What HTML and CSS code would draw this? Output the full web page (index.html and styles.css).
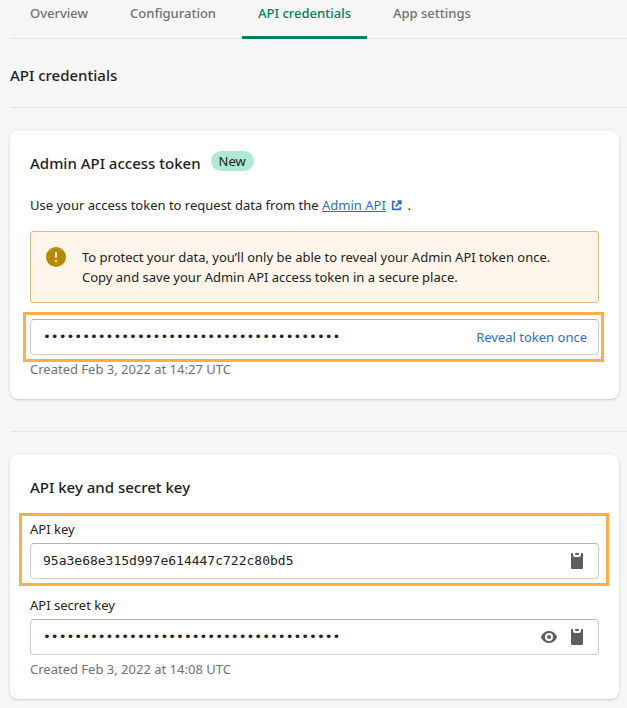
FILE: index.html
```html
<!DOCTYPE html>
<html lang="en">
<head>
<meta charset="utf-8">
<meta name="viewport" content="width=device-width, initial-scale=1">
<title>API credentials</title>
<link rel="stylesheet" href="styles.css">
</head>
<body>
<nav class="tabs">
  <a class="tab" href="#overview">Overview</a>
  <a class="tab" href="#configuration">Configuration</a>
  <a class="tab tab-active" href="#credentials" aria-current="page">API credentials</a>
  <a class="tab" href="#settings">App settings</a>
</nav>
<main class="page">
  <h1 class="page-title">API credentials</h1>

  <section class="section">
    <div class="card">
      <div class="card-header">
        <h2 class="card-title">Admin API access token</h2>
        <span class="badge">New</span>
      </div>
      <p class="intro">Use your access token to request data from the <a class="link" href="#admin-api">Admin API</a> <svg class="external" viewBox="0 0 12 12" aria-hidden="true"><path d="M4.500 1.800H1.800v8.400h8.400V7.500M7 1.200h3.800V5M10.500 1.500 5 7" fill="none" stroke="currentColor" stroke-width="1.800"/></svg> .</p>
      <div class="banner">
        <svg class="banner-icon" viewBox="0 0 20 20" aria-hidden="true"><circle cx="10" cy="10" r="10" fill="#b98900"/><rect x="9" y="5" width="2" height="6" rx="1" fill="#fff5ea"/><circle cx="10" cy="14" r="1.1" fill="#fff5ea"/></svg>
        <p class="banner-text">To protect your data, you’ll only be able to reveal your Admin API token once. Copy and save your Admin API access token in a secure place.</p>
      </div>
      <div class="highlight highlight-token">
        <div class="field">
          <input class="field-input" type="text" readonly aria-label="Admin API access token" value="••••••••••••••••••••••••••••••••••••••">
          <button class="reveal" type="button">Reveal token once</button>
        </div>
      </div>
      <p class="created">Created Feb 3, 2022 at 14:27 UTC</p>
    </div>
  </section>

  <section class="section">
    <div class="card">
      <div class="card-header">
        <h2 class="card-title">API key and secret key</h2>
      </div>
      <div class="highlight highlight-key">
        <label class="label" for="api-key">API key</label>
        <div class="field">
          <input class="field-input" id="api-key" type="text" readonly value="95a3e68e315d997e614447c722c80bd5">
          <button class="icon-button" type="button" aria-label="Copy API key">
            <svg class="icon" viewBox="0 0 20 20" aria-hidden="true"><path d="M5 2h1v2a2 2 0 0 0 2 2h4a2 2 0 0 0 2-2V2h1a1 1 0 0 1 1 1v14a1 1 0 0 1-1 1H5a1 1 0 0 1-1-1V3a1 1 0 0 1 1-1z"/><rect x="8" y="2" width="4" height="2" rx="1"/></svg>
          </button>
        </div>
      </div>
      <div class="secret">
        <label class="label" for="api-secret">API secret key</label>
        <div class="field">
          <input class="field-input" id="api-secret" type="text" readonly value="••••••••••••••••••••••••••••••••••••••">
          <button class="icon-button" type="button" aria-label="Show API secret key">
            <svg class="icon" viewBox="0 0 20 20" aria-hidden="true"><path fill-rule="evenodd" d="M17.900 9.500C17.800 9.300 15.700 4 10 4S2.200 9.300 2.100 9.500a1 1 0 0 0 0 1C2.200 10.700 4.300 16 10 16s7.800-5.300 7.900-5.500a1 1 0 0 0 0-1zM10 14a4 4 0 1 1 0-8 4 4 0 0 1 0 8z"/><circle cx="10" cy="10" r="2"/></svg>
          </button>
          <button class="icon-button" type="button" aria-label="Copy API secret key">
            <svg class="icon" viewBox="0 0 20 20" aria-hidden="true"><path d="M5 2h1v2a2 2 0 0 0 2 2h4a2 2 0 0 0 2-2V2h1a1 1 0 0 1 1 1v14a1 1 0 0 1-1 1H5a1 1 0 0 1-1-1V3a1 1 0 0 1 1-1z"/><rect x="8" y="2" width="4" height="2" rx="1"/></svg>
          </button>
        </div>
      </div>
      <p class="created">Created Feb 3, 2022 at 14:08 UTC</p>
    </div>
  </section>
</main>
</body>
</html>
```
FILE: styles.css
```css
* {
  box-sizing: border-box;
}

body {
  margin: 0;
  background: #f6f6f7;
  color: #202223;
  font: 13px/20px "Noto Sans", "Open Sans", sans-serif;
}

h1,
h2,
p {
  margin: 0;
}

.tabs {
  display: flex;
  gap: 10px;
  margin-left: 10px;
  padding-left: 4px;
  border-bottom: 1px solid #e1e3e5;
}

.tab {
  margin-bottom: -1px;
  padding: 3px 16px 13px;
  border-bottom: 3px solid transparent;
  color: #6d7175;
  font-weight: 500;
  text-decoration: none;
}

.tab-active {
  border-bottom-color: #008060;
  border-radius: 2px 2px 0 0;
  color: #008060;
}

.page {
  padding-left: 10px;
}

.page-title {
  padding: 24px 0 20px;
  font-size: 15px;
  font-weight: 500;
  line-height: 24px;
}

.section {
  padding: 23px 8px 32px 0;
  border-top: 1px solid #e1e3e5;
}

.section:last-child {
  padding-bottom: 9px;
}

.card {
  padding: 20px;
  border-radius: 8px;
  background: #fff;
  box-shadow: 0 0 5px rgba(23, 24, 24, 0.05), 0 1px 2px rgba(0, 0, 0, 0.15);
}

.card-header {
  display: flex;
  align-items: flex-start;
  gap: 10px;
  margin-bottom: 20px;
}

.card-title {
  font-size: 15px;
  font-weight: 500;
  line-height: 24px;
}

.badge {
  padding: 0 8px;
  border-radius: 10px;
  background: #aee9d1;
}

.link,
.external {
  color: #2c6ecb;
}

.external {
  width: 11px;
  height: 11px;
  margin: 0 2px;
  vertical-align: -1px;
}

.banner {
  display: flex;
  gap: 16px;
  margin: 16px 0;
  padding: 15px;
  border: 1px solid #e1b878;
  border-radius: 3px;
  background: #fff5ea;
}

.banner-icon {
  flex: none;
  width: 20px;
  height: 20px;
}

.banner-text {
  max-width: 490px;
}

.highlight {
  position: relative;
}

.highlight::after {
  content: "";
  position: absolute;
  border: 3px solid #ffad4a;
  pointer-events: none;
}

.highlight-token::after {
  inset: -7px -5px -7px -7px;
}

.highlight-key::after {
  inset: -6px -10px -7px -11px;
}

.label {
  display: block;
  margin-bottom: 4px;
}

.field {
  display: flex;
  align-items: center;
  height: 36px;
  padding: 0 11px 0 12px;
  border: 1px solid #c9cccf;
  border-top-color: #aeb4b9;
  border-radius: 4px;
  background: #fff;
}

.field-input {
  flex: 1;
  min-width: 0;
  padding: 0;
  border: 0;
  outline: 0;
  background: none;
  color: inherit;
  font: 13px/20px "DejaVu Sans Mono", monospace;
}

.reveal {
  padding: 0;
  border: 0;
  background: none;
  color: #2c6ecb;
  font: inherit;
}

.icon-button {
  display: flex;
  padding: 0 0 0 8px;
  border: 0;
  background: none;
}

.icon {
  width: 20px;
  height: 20px;
  fill: #5c5f62;
}

.secret {
  margin-top: 16px;
}

.created {
  margin-top: 4px;
  color: #6d7175;
}
```
